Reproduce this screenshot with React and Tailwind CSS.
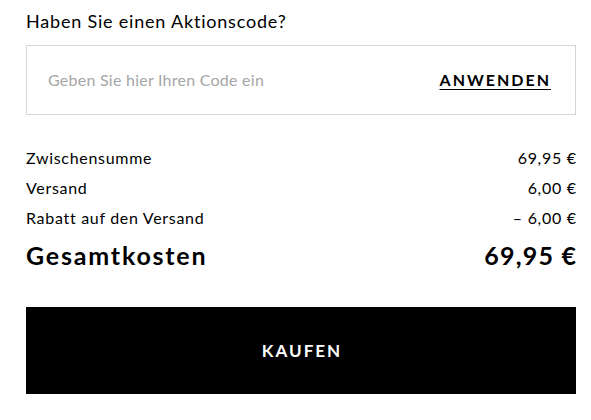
import { useState } from "react";

const rows = [
  { label: "Zwischensumme", value: "69,95 €" },
  { label: "Versand", value: "6,00 €" },
  { label: "Rabatt auf den Versand", value: "– 6,00 €" },
];

export default function App() {
  const [code, setCode] = useState("");

  return (
    <div className="min-h-[420px] bg-white pl-[26px] pr-[15px] pt-[8px] font-['Lato',sans-serif] text-black [font-variant-ligatures:none]">
      <h2 className="text-[18px] leading-[27px] tracking-[0.8px]">Haben Sie einen Aktionscode?</h2>

      {/* Promo code */}
      <div className="mt-[10px] flex h-[70px] items-center justify-between border border-[#d6d6d6] pl-[21px] pr-[26px]">
        <input
          value={code}
          onChange={(e) => setCode(e.target.value)}
          placeholder="Geben Sie hier Ihren Code ein"
          className="w-[300px] bg-transparent text-[16px] tracking-[0.25px] outline-none placeholder:text-[#a6a6a6]"
        />
        <button className="-mr-[2px] text-[16px] font-bold tracking-[2px] underline underline-offset-[3px]">
          ANWENDEN
        </button>
      </div>

      {/* Summary */}
      <div className="mt-[28px]">
        {rows.map((row) => (
          <div key={row.label} className="flex h-[30px] items-center justify-between text-[16px] tracking-[0.7px]">
            <span>{row.label}</span>
            <span className="-mr-[0.7px]">{row.value}</span>
          </div>
        ))}
        <div className="mt-[5px] flex h-[36px] items-center justify-between text-[25px] font-bold">
          <span className="tracking-[1.8px]">Gesamtkosten</span>
          <span className="-mr-[1.2px] tracking-[1.2px]">69,95 €</span>
        </div>
      </div>

      <button className="mt-[33px] flex h-[87px] w-full items-center justify-center bg-black pl-[2px] text-[17px] font-bold tracking-[2px] text-white">
        KAUFEN
      </button>
    </div>
  );
}
